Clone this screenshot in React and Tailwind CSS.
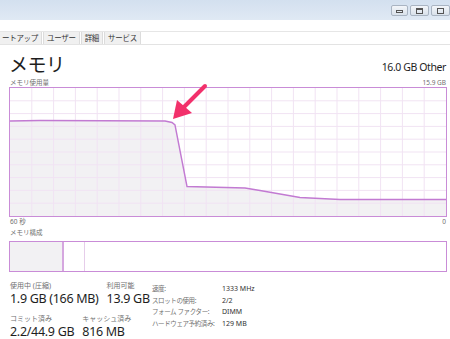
import React from 'react';

const font = { fontFamily: '"Noto Sans", "Noto Sans CJK JP", sans-serif' };

const tabs = ['ートアップ', 'ユーザー', '詳細', 'サービス'];

const specs = [
  ['速度:', '1333 MHz'],
  ['スロットの使用:', '2/2'],
  ['フォーム ファクター:', 'DIMM'],
  ['ハードウェア予約済み:', '129 MB'],
];

// usage line, in chart coords (436 x 128)
const points = [
  [0, 33], [30, 32.5], [155, 33], [162, 34.5], [165, 37], [177, 98.5],
  [235, 100], [250, 102.5], [290, 109.5], [330, 111.5], [436, 111.5],
];

const UsageChart = () => {
  const line = points.map(p => p.join(',')).join(' ');
  const area = `0,128 ${line} 436,128`;
  const cols = Array.from({ length: 19 }, (_, i) => (i + 1) * 21.8);
  const rows = Array.from({ length: 9 }, (_, i) => (i + 1) * 12.8);
  return (
    <svg width="436" height="128" viewBox="0 0 436 128" className="block">
      <polygon points={area} fill="#f2f1f3" />
      {cols.map(x => (
        <line key={x} x1={x} y1="0" x2={x} y2="128" stroke="#f1e3f3" strokeWidth="1" />
      ))}
      {rows.map(y => (
        <line key={y} x1="0" y1={y} x2="436" y2={y} stroke="#f1e3f3" strokeWidth="1" />
      ))}
      <polyline points={line} fill="none" stroke="#c27ad2" strokeWidth="1.4" />
    </svg>
  );
};

const WinButton = ({ children, wide }) => (
  <div className={`h-[11px] ${wide ? 'w-[19px]' : 'w-[17px]'} rounded-[2px] border border-[#a9b4c2] bg-gradient-to-b from-[#f3f6fa] to-[#d9e1ea] flex items-center justify-center`}>
    {children}
  </div>
);

export default function App() {
  return (
    <div className="relative w-[450px] h-[339px] overflow-hidden bg-white text-[#1e1e1e]" style={font}>
      {/* title bar */}
      <div className="h-[20px] bg-gradient-to-b from-[#d3e0ef] to-[#e0e9f4] flex justify-end items-start pt-[5px] gap-[2px]">
        <WinButton>
          <div className="w-[7px] h-[3px] border border-[#555] mt-[2px]" />
        </WinButton>
        <WinButton wide>
          <div className="w-[7px] h-[6px] border border-[#555] border-t-2" />
        </WinButton>
        <WinButton wide>
          <div className="w-[7px] h-[6px] border border-[#555]" />
        </WinButton>
      </div>

      {/* tabs */}
      <div className="h-[25px] pt-[11px] border-b border-[#e3e3e3]">
        <div className="flex h-[13px] border-t border-[#e6e6e6] ml-[-2px]">
          {tabs.map(t => (
            <div key={t} className="px-[3px] mr-[1px] bg-[#f0f0f0] border-x border-[#dcdcdc] text-[7.5px] leading-[12px] text-[#333] tracking-[-0.3px]">
              {t}
            </div>
          ))}
        </div>
      </div>

      {/* heading */}
      <div className="flex items-end justify-between pl-[9px] pr-[4px] h-[32px]">
        <div className="text-[19px] leading-[24px] tracking-[-0.5px]">メモリ</div>
        <div className="text-[10.5px] leading-[14px] tracking-[-0.4px] mb-[3px]">16.0 GB Other</div>
      </div>

      <div className="flex justify-between pl-[10px] pr-[4px] mt-[1px] text-[6.5px] leading-[9px] text-[#707070]">
        <span>メモリ使用量</span>
        <span>15.9 GB</span>
      </div>

      {/* usage chart */}
      <div className="relative ml-[9px] w-[438px] border border-[#c98cd7]">
        <UsageChart />
      </div>

      <div className="flex justify-between pl-[10px] pr-[4px] text-[6.5px] leading-[10px] text-[#707070]">
        <span>60 秒</span>
        <span>0</span>
      </div>
      <div className="pl-[10px] mt-[1px] text-[6.5px] leading-[10px] text-[#707070]">メモリ構成</div>

      {/* composition */}
      <div className="ml-[9px] mt-[3px] w-[438px] h-[31px] border border-[#c98cd7] flex">
        <div className="w-[54px] bg-[#f2f1f3] border-r-2 border-[#d5a7df]" />
        <div className="w-[21px] border-r border-[#e6cdea]" />
        <div className="flex-1" />
      </div>

      {/* stats */}
      <div className="flex pl-[10px] mt-[9px]">
        <div className="w-[142px]">
          <div className="flex gap-[8px]">
            <div>
              <div className="text-[7px] leading-[10px] text-[#707070]">使用中 (圧縮)</div>
              <div className="text-[12.5px] leading-[16px] tracking-[-0.3px]">1.9 GB (166 MB)</div>
            </div>
            <div>
              <div className="text-[7px] leading-[10px] text-[#707070]">利用可能</div>
              <div className="text-[12.5px] leading-[16px] tracking-[-0.3px]">13.9 GB</div>
            </div>
          </div>
          <div className="flex gap-[8px] mt-[7px]">
            <div>
              <div className="text-[7px] leading-[10px] text-[#707070]">コミット済み</div>
              <div className="text-[12.5px] leading-[16px] tracking-[-0.3px]">2.2/44.9 GB</div>
            </div>
            <div>
              <div className="text-[7px] leading-[10px] text-[#707070]">キャッシュ済み</div>
              <div className="text-[12.5px] leading-[16px] tracking-[-0.3px]">816 MB</div>
            </div>
          </div>
        </div>
        <div className="pt-[2px]">
          {specs.map(([k, v]) => (
            <div key={k} className="flex text-[7px] leading-[11.5px] whitespace-nowrap">
              <span className="w-[70px] text-[6.5px] text-[#707070] tracking-[-0.4px]">{k}</span>
              <span className="text-[#333]">{v}</span>
            </div>
          ))}
        </div>
      </div>

      {/* annotation arrow */}
      <svg className="absolute left-0 top-0 pointer-events-none" width="450" height="339">
        <line x1="205" y1="86" x2="184" y2="107" stroke="#f2306b" strokeWidth="4" strokeLinecap="round" />
        <polygon points="173,119 177,100 192,113" fill="#f2306b" />
      </svg>
    </div>
  );
}
